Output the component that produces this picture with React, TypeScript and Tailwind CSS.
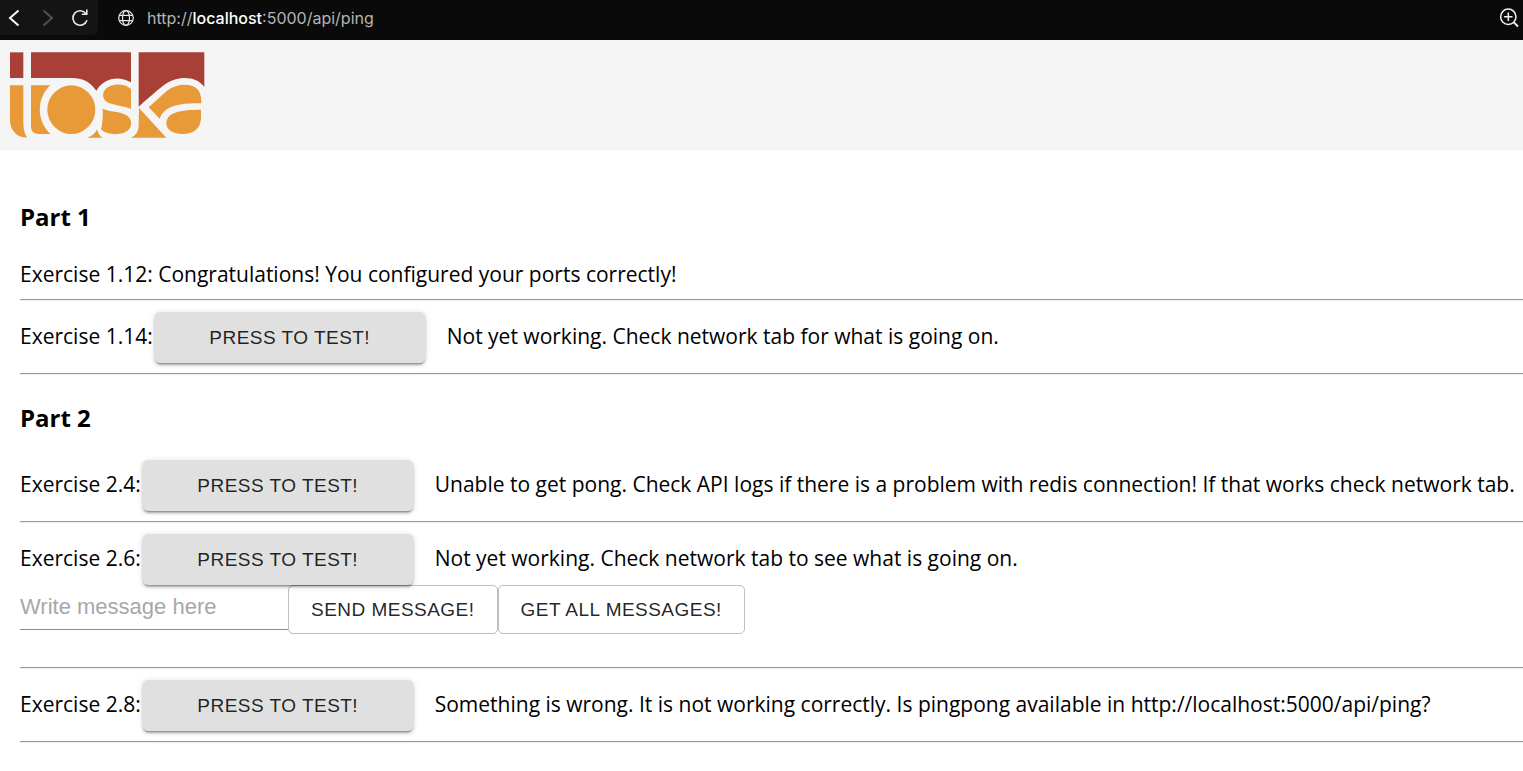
import type { ReactNode } from "react";

function BrowserBar() {
  return (
    <div className="flex h-10 items-center bg-[#0a0a0a] text-white">
      <div className="flex h-[35px] w-[98px] items-center self-start rounded-br-md bg-[#141414] pt-px">
        <button type="button" aria-label="Back" className="flex w-7 justify-center">
          <svg width="12" height="18" viewBox="0 0 12 18" fill="none" stroke="currentColor" strokeWidth="2">
            <path d="M10.500 1.500 2 9l8.500 7.500" />
          </svg>
        </button>
        <button type="button" aria-label="Forward" className="flex w-10 justify-center text-[#505050]">
          <svg width="12" height="18" viewBox="0 0 12 18" fill="none" stroke="currentColor" strokeWidth="2">
            <path d="M1.500 1.500 10 9l-8.500 7.500" />
          </svg>
        </button>
        <button type="button" aria-label="Reload" className="flex w-6 justify-center text-[#e8e8e8]">
          <svg width="18" height="18" viewBox="0 0 18 18" fill="none" stroke="currentColor" strokeWidth="1.600">
            <path d="M16 11.200A7.200 7.200 0 1 1 15 4.800M10.800 5.300h5V.6" />
          </svg>
        </button>
      </div>
      <div className="flex flex-1 items-center pb-1 pl-5">
        <svg width="16" height="16" viewBox="0 0 16 16" fill="none" stroke="#e8e8e8" strokeWidth="1.200">
          <circle cx="8" cy="8" r="7.300" />
          <ellipse cx="8" cy="8" rx="3.500" ry="7.300" />
          <path d="M1.300 5.300h13.400M1.300 10.700h13.400" />
        </svg>
        <span className="pl-[13px] font-['Inter',sans-serif] text-base text-[#b4b4b4]">
          http://<span className="font-medium text-white">localhost</span>:5000/api/ping
        </span>
      </div>
      <button type="button" aria-label="Zoom" className="mr-1 pb-1">
        <svg width="20" height="20" viewBox="0 0 20 20" fill="none" stroke="#f0f0f0" strokeWidth="1.500">
          <circle cx="9.300" cy="8.800" r="7.700" />
          <path d="M9.300 4.600v8.400M5.100 8.800h8.400" />
          <path d="m14.800 14.300 4.200 4.200" strokeWidth="1.900" />
        </svg>
      </button>
    </div>
  );
}

function ToskaLogo() {
  return (
    <svg role="img" aria-label="toska" width="195" height="86" viewBox="29 36 585 258">
      <g fill="#a84038">
        <path d="M29 37H69V114H29Z" />
        <path d="M92 37H392V127C355 106 312 112 288 152C268 124 245 114 215 114H92Z" />
        <path d="M415 37H612V141C590 110 535 103 490 136C465 156 440 178 415 200Z" />
      </g>
      <g fill="#e99a38">
        <path d="M29 136H69V240C69 265 72 282 81 293C50 293 29 272 29 240Z" />
        <path d="M92 136H150C108 175 108 241 150 282H116C100 282 92 274 92 258Z" />
        <ellipse cx="213" cy="209" rx="72" ry="73" />
        <path d="M392 147V207C372 198 345 196 326 189C308 182 305 165 311 154C324 130 370 127 392 147Z" />
        <path d="M307 206C328 216 360 214 378 225C395 236 396 256 386 268C370 287 322 288 302 268C307 250 308 228 307 206Z" />
        <path d="M260 293C275 289 284 281 290 268C293 280 298 288 306 293Z" />
        <path d="M416 204L498 293H391C408 287 415 273 415 255Z" />
        <path d="M445 202L500 152C530 129 572 129 590 146C600 156 603 170 603 190C550 190 494 192 478 236Z" />
        <path d="M602 209V232C602 266 580 282 547 282C518 282 498 270 498 249C498 217 540 209 602 209Z" />
      </g>
    </svg>
  );
}

function Row({ label, children }: { label: string; children: ReactNode }) {
  return (
    <div className="flex items-center">
      <span className="mr-[2px] whitespace-nowrap pb-1">{label}</span>
      <button
        type="button"
        className="mr-[22px] h-[51px] w-[270px] shrink-0 rounded-[5px] bg-[#e0e0e0] font-['Liberation_Sans',sans-serif] text-[19px] tracking-wide text-black/87 shadow-[0_3px_2px_-2px_rgba(0,0,0,0.3),0_2px_3px_rgba(0,0,0,0.2),0_1px_6px_rgba(0,0,0,0.15)]"
      >
        PRESS TO TEST!
      </button>
      <span className="pb-1">{children}</span>
    </div>
  );
}

function Rule() {
  return <hr className="mb-[11px] mt-[10px] h-[2px] border-t border-[#9a9a9a] bg-[#eeeeee]" />;
}

const outlined =
  "h-[49px] rounded-[5px] border border-black/25 px-[22px] font-['Liberation_Sans',sans-serif] text-[19px] tracking-wide text-black/87";

export default function App() {
  return (
    <div className="min-h-screen bg-white">
      <BrowserBar />
      <header className="flex h-[110px] items-start bg-[#f5f5f5] px-[10px] pt-3">
        <ToskaLogo />
      </header>
      <main className="pl-5 pt-[50px] font-['Open_Sans',sans-serif] text-[21px] leading-[30px] text-black">
        <h3 className="mb-[25px] text-[24px] font-bold leading-[34px]">Part 1</h3>
        <p>Exercise 1.12: Congratulations! You configured your ports correctly!</p>
        <Rule />
        <Row label="Exercise 1.14:">Not yet working. Check network tab for what is going on.</Row>
        <Rule />
        <h3 className="mb-[25px] mt-[26px] text-[24px] font-bold leading-[34px]">Part 2</h3>
        <Row label="Exercise 2.4:">
          Unable to get pong. Check API logs if there is a problem with redis connection! If that works check network tab.
        </Row>
        <Rule />
        <Row label="Exercise 2.6:">Not yet working. Check network tab to see what is going on.</Row>
        <form className="mb-[33px] flex items-start" onSubmit={(e) => e.preventDefault()}>
          <input
            type="text"
            aria-label="Message"
            placeholder="Write message here"
            className="h-[45px] w-[268px] border-b border-[#8c8c8c] font-['Liberation_Sans',sans-serif] text-[22px] outline-none placeholder:text-[#a8a8a8]"
          />
          <button type="submit" className={outlined}>SEND MESSAGE!</button>
          <button type="button" className={outlined}>GET ALL MESSAGES!</button>
        </form>
        <Rule />
        <Row label="Exercise 2.8:">
          Something is wrong. It is not working correctly. Is pingpong available in http://localhost:5000/api/ping?
        </Row>
        <Rule />
      </main>
    </div>
  );
}
